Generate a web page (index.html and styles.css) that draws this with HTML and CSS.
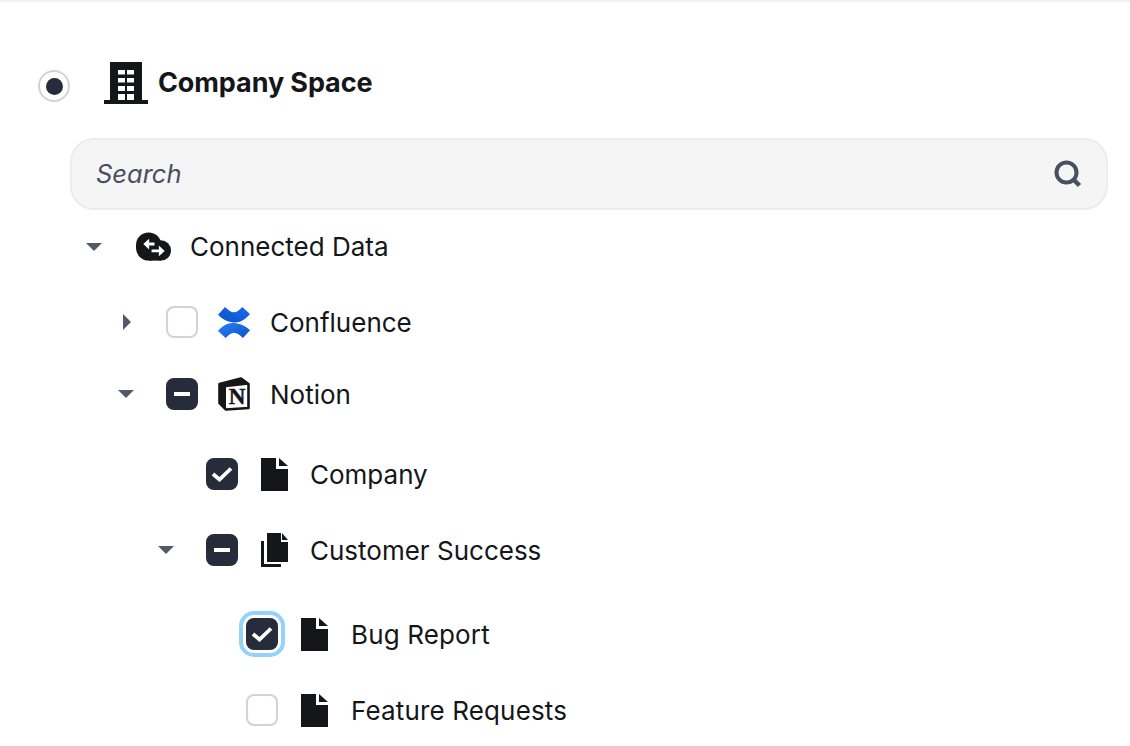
FILE: index.html
```html
<!DOCTYPE html>
<html lang="en">
<head>
    <meta charset="UTF-8">
    <title>Company Space</title>
    <link rel="stylesheet" href="styles.css">
</head>
<body>
    <div class="space">
        <span class="radio"><span class="radio-dot"></span></span>
        <svg class="building" width="44" height="42" viewBox="0 0 44 42">
            <path fill="#14161a" fill-rule="evenodd" d="M6 0h32v38h6v4H0v-4h6z M14 8v4.500h7V8z M23 8v4.500h7V8z M14 16v4.500h7V16z M23 16v4.500h7V16z M14 24v5h7v-5z M23 24v5h7v-5z M14 32v6h7v-6z M23 32v6h7v-6z"/>
        </svg>
        <h1 class="space-title">Company Space</h1>
    </div>

    <div class="search">
        <span class="search-text">Search</span>
        <svg width="28" height="28" viewBox="0 0 28 28">
            <circle cx="12.500" cy="12.500" r="10" fill="none" stroke="#475060" stroke-width="4"/>
            <path d="M20.500 20.500l5 5" stroke="#475060" stroke-width="4.500" fill="none"/>
        </svg>
    </div>

    <div class="tree">
        <div class="row row-root">
            <span class="caret caret-down"></span>
            <span class="icon icon-root">
                <svg width="37" height="30" viewBox="0 0 37 30">
                    <circle cx="13" cy="13" r="13" fill="#14161a"/>
                    <circle cx="13" cy="16" r="13" fill="#14161a"/>
                    <circle cx="25.500" cy="18.500" r="10.500" fill="#14161a"/>
                    <rect x="13" y="18" width="13" height="11" fill="#14161a"/>
                    <path fill="none" stroke="#fff" stroke-width="3" d="M12 12h7M24 19h-8"/>
                    <path fill="#fff" d="M7.500 12l6-5.500v11zM29.500 19l-6-5.500v11z"/>
                </svg>
            </span>
            <span class="label">Connected Data</span>
        </div>

        <div class="row row-one gap-s">
            <span class="caret caret-right"></span>
            <span class="check"></span>
            <span class="icon">
                <svg width="32" height="31" viewBox="0 0 32 31">
                    <defs>
                        <linearGradient id="confA" x1="1" y1="0" x2="0" y2="1">
                            <stop offset="0" stop-color="#1a6cf0"/>
                            <stop offset="1" stop-color="#0c52c4"/>
                        </linearGradient>
                        <linearGradient id="confB" x1="0" y1="0" x2="1" y2="1">
                            <stop offset="0" stop-color="#2a80fa"/>
                            <stop offset="1" stop-color="#0c52c4"/>
                        </linearGradient>
                    </defs>
                    <path fill="url(#confA)" d="M0 7.700L7 0C10 3 13 5.300 16 5.300C19 5.300 21.500 3 24.300 0L32 7C28 11.500 23 15.500 17.500 15.500C11.500 15.500 5 13 0 7.700z"/>
                    <path fill="url(#confB)" d="M32 23.300L25 31C22 28 19 25.700 16 25.700C13 25.700 10.500 28 7.700 31L0 24C4 19.500 9 16 14.500 16C20.500 16 27 18 32 23.300z"/>
                </svg>
            </span>
            <span class="label">Confluence</span>
        </div>

        <div class="row row-one">
            <span class="caret caret-down"></span>
            <span class="check check-on"><span class="dash"></span></span>
            <span class="icon">
                <svg width="32" height="34" viewBox="0 0 32 34">
                    <path fill="#fff" stroke="#14161a" stroke-width="2.600" stroke-linejoin="round" d="M1.500 7L23 1.500L30.500 7V31L8 32.500L1.500 26z"/>
                    <path fill="#14161a" stroke="#14161a" stroke-width="1.500" stroke-linejoin="round" d="M2 7L22 2L30 7L8 9.500z"/>
                    <path fill="#14161a" d="M1.500 7L8 9.500V32L1.500 26z"/>
                    <text class="notion-n" x="19" y="26.500" text-anchor="middle">N</text>
                </svg>
            </span>
            <span class="label">Notion</span>
        </div>

        <div class="row row-two gap-l">
            <span class="caret"></span>
            <span class="check check-on">
                <svg width="22" height="16" viewBox="0 0 22 16"><path d="M2 8l6.500 5.500L20 2.500" fill="none" stroke="#fff" stroke-width="3.800"/></svg>
            </span>
            <span class="icon">
                <svg width="27" height="33" viewBox="0 0 27 33">
                    <path fill="#14161a" d="M0 0h15v11h12v22H0z"/>
                    <path fill="#14161a" d="M18 0l9 8h-9z"/>
                </svg>
            </span>
            <span class="label">Company</span>
        </div>

        <div class="row row-two gap-m">
            <span class="caret caret-down"></span>
            <span class="check check-on"><span class="dash"></span></span>
            <span class="icon">
                <svg width="27" height="34" viewBox="0 0 27 34">
                    <path fill="#14161a" d="M6 0h14v9h7v20H6z"/>
                    <path fill="#14161a" d="M21 0l6 7h-6z"/>
                    <path fill="#14161a" d="M0 8h3v23h17v3H0z"/>
                </svg>
            </span>
            <span class="label">Customer Success</span>
        </div>

        <div class="row row-three gap-xl">
            <span class="caret"></span>
            <span class="check check-on check-focus">
                <svg width="22" height="16" viewBox="0 0 22 16"><path d="M2 8l6.500 5.500L20 2.500" fill="none" stroke="#fff" stroke-width="3.800"/></svg>
            </span>
            <span class="icon">
                <svg width="27" height="33" viewBox="0 0 27 33">
                    <path fill="#14161a" d="M0 0h15v11h12v22H0z"/>
                    <path fill="#14161a" d="M18 0l9 8h-9z"/>
                </svg>
            </span>
            <span class="label">Bug Report</span>
        </div>

        <div class="row row-three gap-m">
            <span class="caret"></span>
            <span class="check"></span>
            <span class="icon">
                <svg width="27" height="33" viewBox="0 0 27 33">
                    <path fill="#14161a" d="M0 0h15v11h12v22H0z"/>
                    <path fill="#14161a" d="M18 0l9 8h-9z"/>
                </svg>
            </span>
            <span class="label">Feature Requests</span>
        </div>
    </div>
</body>
</html>
```

FILE: styles.css
```css
html, body {
    height: 100%;
}

body {
    margin: 0;
    overflow: hidden;
    box-sizing: border-box;
    background: #ffffff;
    border-top: 2px solid #f0f0f0;
    font-family: Inter, "Liberation Sans", sans-serif;
    color: #14161a;
}

.space {
    display: flex;
    align-items: center;
    padding: 60px 0 0 38px;
}

.radio {
    display: flex;
    align-items: center;
    justify-content: center;
    width: 32px;
    height: 32px;
    box-sizing: border-box;
    border: 2px solid #d2d2d8;
    border-radius: 50%;
    margin-top: 6px;
}

.radio-dot {
    width: 17px;
    height: 17px;
    border-radius: 50%;
    background: #262c3a;
}

.building {
    margin-left: 34px;
}

.space-title {
    margin: 0 0 2px 10px;
    font-size: 27px;
    font-weight: 700;
    letter-spacing: -0.1px;
}

.search {
    display: flex;
    align-items: center;
    justify-content: space-between;
    box-sizing: border-box;
    width: 1038px;
    height: 72px;
    margin: 34px 0 0 70px;
    padding: 0 24px;
    background: #f5f5f6;
    border: 2px solid #ececee;
    border-radius: 24px;
}

.search-text {
    font-size: 25.5px;
    font-style: italic;
    color: #475060;
    margin-bottom: 2px;
}

.tree {
    display: flex;
    flex-direction: column;
    margin-top: 1px;
}

.row {
    display: flex;
    align-items: center;
    gap: 18px;
    height: 72px;
}

.row-root {
    padding-left: 78px;
}

.row-one {
    padding-left: 110px;
}

.row-two {
    padding-left: 150px;
}

.row-three {
    padding-left: 190px;
    letter-spacing: 0.15px;
}

.gap-s {
    margin-top: 3px;
}

.gap-m {
    margin-top: 4px;
}

.gap-l {
    margin-top: 8px;
}

.gap-xl {
    margin-top: 12px;
}

.caret {
    display: flex;
    justify-content: center;
    width: 32px;
    margin-right: 6px;
}

.row-root .caret {
    margin-right: 8px;
}

.caret-down::before {
    content: "";
    border-left: 8px solid transparent;
    border-right: 8px solid transparent;
    border-top: 8px solid #525a6a;
}

.caret-right::before {
    content: "";
    border-top: 8px solid transparent;
    border-bottom: 8px solid transparent;
    border-left: 8px solid #525a6a;
    margin-left: 2px;
}

.check {
    display: flex;
    align-items: center;
    justify-content: center;
    width: 32px;
    height: 32px;
    box-sizing: border-box;
    border: 2px solid #d2d2d8;
    border-radius: 8px;
    flex-shrink: 0;
}

.check-on {
    background: #262c3a;
    border-color: #262c3a;
}

.check-focus {
    box-shadow: 0 0 0 3px #ffffff, 0 0 0 7px #93d2fb;
}

.dash {
    width: 16px;
    height: 4px;
    background: #ffffff;
}

.icon {
    display: flex;
    align-items: center;
    justify-content: center;
    width: 36px;
}

.label {
    font-size: 26px;
    line-height: 32px;
    margin-top: 2px;
}

.row-root .label {
    margin-top: 0;
}

.row-three .label {
    margin-left: 1px;
}

.notion-n {
    font-family: "Liberation Serif", serif;
    font-weight: 700;
    font-size: 23px;
    fill: #14161a;
    stroke: #14161a;
    stroke-width: 0.5;
}
```
